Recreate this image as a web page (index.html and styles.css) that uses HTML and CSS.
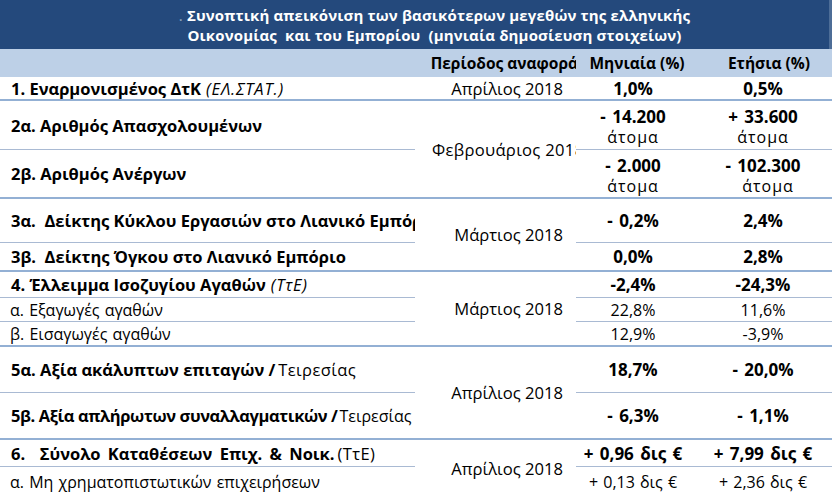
FILE: index.html
```html
<!DOCTYPE html>
<html lang="el">
<head>
<meta charset="utf-8">
<title>Συνοπτική απεικόνιση</title>
<link rel="stylesheet" href="styles.css">
</head>
<body>
<div class="sheet">
  <div class="title"><span class="dot">.</span>Συνοπτική απεικόνιση των βασικότερων μεγεθών της ελληνικής<br>Οικονομίας&nbsp; και του Εμπορίου&nbsp; (μηνιαία δημοσίευση στοιχείων)</div>

  <div class="sub"></div>
  <div class="sub sub-period">Περίοδος αναφορά</div>
  <div class="sub sub-val">Μηνιαία (%)</div>
  <div class="sub sub-val sub-year">Ετήσια (%)</div>

  <!-- row 1 -->
  <div class="lbl thick r1">1. Εναρμονισμένος ΔτΚ <i class="norm">(ΕΛ.ΣΤΑΤ.)</i></div>
  <div class="per thick r1">Απρίλιος 2018</div>
  <div class="val thick r1"><b>1,0%</b></div>
  <div class="val thick r1 yr"><b>0,5%</b></div>

  <!-- group 2 -->
  <div class="lbl thin r2a">2α. Αριθμός Απασχολουμένων</div>
  <div class="per thick per-feb g2">Φεβρουάριος 2018</div>
  <div class="val thin r2a two"><b>- 14.200</b><span>άτομα</span></div>
  <div class="val thin r2a two yr"><b>+ 33.600</b><span>άτομα</span></div>
  <div class="lbl thick r2b">2β. Αριθμός Ανέργων</div>
  <div class="val thick r2b two"><b>- 2.000</b><span>άτομα</span></div>
  <div class="val thick r2b two yr"><b>- 102.300</b><span class="shift">άτομα</span></div>

  <!-- group 3 -->
  <div class="lbl thin r3a">3α.&nbsp; Δείκτης Κύκλου Εργασιών στο Λιανικό Εμπόριο</div>
  <div class="per thick g3">Μάρτιος 2018</div>
  <div class="val thin r3a"><b>- 0,2%</b></div>
  <div class="val thin r3a yr"><b>2,4%</b></div>
  <div class="lbl thick r3b">3β.&nbsp; Δείκτης Όγκου στο Λιανικό Εμπόριο</div>
  <div class="val thick r3b"><b>0,0%</b></div>
  <div class="val thick r3b yr"><b>2,8%</b></div>

  <!-- group 4 -->
  <div class="lbl thin r4">4. Έλλειμμα Ισοζυγίου Αγαθών <i class="norm">(ΤτΕ)</i></div>
  <div class="per thick g4">Μάρτιος 2018</div>
  <div class="val thin r4"><b>-2,4%</b></div>
  <div class="val thin r4 yr"><b>-24,3%</b></div>
  <div class="lbl lbl-sub thin r4a">α. Εξαγωγές αγαθών</div>
  <div class="val val-sub thin r4a">22,8%</div>
  <div class="val val-sub thin r4a yr">11,6%</div>
  <div class="lbl lbl-sub thick r4b">β. Εισαγωγές αγαθών</div>
  <div class="val val-sub thick r4b">12,9%</div>
  <div class="val val-sub thick r4b yr">-3,9%</div>

  <!-- group 5 -->
  <div class="lbl thin r5a">5α. Αξία ακάλυπτων επιταγών /<span class="norm">Τειρεσίας</span></div>
  <div class="per thick g5">Απρίλιος 2018</div>
  <div class="val thin r5a"><b>18,7%</b></div>
  <div class="val thin r5a yr"><b>- 20,0%</b></div>
  <div class="lbl lbl-tight thick r5b">5β. Αξία απλήρωτων συναλλαγματικών /<span class="norm">Τειρεσίας</span></div>
  <div class="val thick r5b"><b>- 6,3%</b></div>
  <div class="val thick r5b yr"><b>- 1,1%</b></div>

  <!-- group 6 -->
  <div class="lbl lbl-wide thin r6">6.&nbsp; Σύνολο Καταθέσεων Επιχ. &amp; Νοικ. <span class="norm">(ΤτΕ)</span></div>
  <div class="per g6">Απρίλιος 2018</div>
  <div class="val thin r6"><b>+ 0,96 δις €</b></div>
  <div class="val thin r6 yr"><b>+ 7,99 δις €</b></div>
  <div class="lbl lbl-sub r6a">α. Μη χρηματοπιστωτικών επιχειρήσεων</div>
  <div class="val val-sub r6a">+ 0,13 δις €</div>
  <div class="val val-sub r6a yr">+ 2,36 δις €</div>
</div>
</body>
</html>
```

FILE: styles.css
```css
* { box-sizing: border-box; }
html, body { margin: 0; padding: 0; background: #ffffff; }
body {
  font-family: "Open Sans", "Noto Sans", "DejaVu Sans", sans-serif;
  color: #000;
}
.sheet {
  width: 832px;
  height: 497px;
  overflow: hidden;
  display: grid;
  grid-template-columns: 415px 161px 114px 142px;
  grid-template-rows: 49px 28px 24px 49px 49px 44px 29px 26px 24px 25px 46px 47px 27px 30px;
}
.title {
  grid-column: 1 / 5;
  background: #24497c;
  color: #fff;
  font-weight: 700;
  font-size: 15px;
  line-height: 20px;
  text-align: center;
  padding: 5px 0 0 40px;
  letter-spacing: 0.15px;
  border-right: 3px solid #4d6d97;
}
.dot { opacity: 0.5; margin-right: 4px; font-weight: 400; }
.sub {
  background: #bdd0e7;
  font-weight: 700;
  font-size: 15.5px;
  display: flex;
  align-items: center;
  white-space: nowrap;
}
.sub-period { justify-content: flex-end; margin-right: -2px; }
.sub-val { justify-content: center; padding-left: 8px; }
.sub-year { padding-left: 16px; }

.lbl {
  grid-column: 1;
  font-weight: 700;
  font-size: 16.5px;
  padding-left: 11px;
  white-space: nowrap;
  overflow: hidden;
  display: flex;
  align-items: center;
}
.lbl .norm { font-weight: 400; margin-left: 5px; font-size: 16.5px; letter-spacing: 0.8px; }
.lbl i.norm { font-style: italic; }
.lbl span.norm { margin-left: 3px; letter-spacing: 0.4px; }
.lbl-tight { letter-spacing: -0.4px; }
.lbl-tight span.norm { letter-spacing: 0; margin-left: 2px; font-size: 16px; }
.lbl-wide { word-spacing: 3px; }
.lbl-sub { font-weight: 400; font-size: 16px; padding-left: 10px; word-spacing: 1px; }

.per {
  grid-column: 2;
  font-size: 16.6px;
  display: flex;
  align-items: center;
  justify-content: flex-end;
  padding-right: 13px;
  white-space: nowrap;
  overflow: hidden;
}
.per-feb { justify-content: flex-start; padding-left: 17px; padding-right: 0; letter-spacing: 0.3px; }

.val {
  grid-column: 3;
  font-size: 17px;
  display: flex;
  flex-direction: column;
  align-items: center;
  justify-content: center;
  white-space: nowrap;
  word-spacing: 2px;
}
.val.yr { grid-column: 4; padding-left: 4px; }
.val b { font-weight: 700; }
.val-sub { font-size: 16px; word-spacing: 1px; }
.two { justify-content: flex-start; padding-top: 6px; }
.two b { display: block; line-height: 20px; }
.two span { display: block; line-height: 20px; font-size: 16px; letter-spacing: 1px; }
.two .shift { margin-left: 10px; }

.thin { border-bottom: 1px solid #a9bad3; }
.thick { border-bottom: 2px solid #93b0d4; }

.r1 { grid-row: 3; }
.r2a { grid-row: 4; }
.r2b { grid-row: 5; }
.g2 { grid-row: 4 / 6; }
.r3a { grid-row: 6; }
.r3b { grid-row: 7; }
.g3 { grid-row: 6 / 8; }
.r4 { grid-row: 8; }
.r4a { grid-row: 9; }
.r4b { grid-row: 10; }
.g4 { grid-row: 8 / 11; }
.r5a { grid-row: 11; }
.r5b { grid-row: 12; }
.g5 { grid-row: 11 / 13; }
.r6 { grid-row: 13; }
.r6a { grid-row: 14; }
.g6 { grid-row: 13 / 15; }
```
